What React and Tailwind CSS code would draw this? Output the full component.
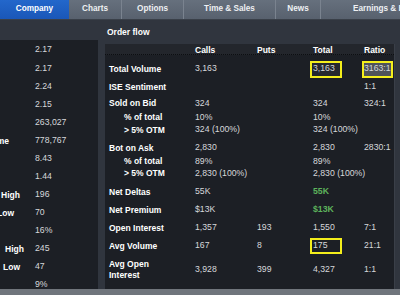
import React from "react";

const F = "font-['Liberation_Sans',Arial,Helvetica,sans-serif]";

function Tab({ w, active, children, border = true, extra = "" }) {
  return (
    <div
      className={`${w} shrink-0 h-full flex items-center justify-center whitespace-nowrap font-bold text-[8.2px] ${
        active
          ? "bg-gradient-to-b from-[#2367cb] to-[#1a57b8] text-white"
          : "text-[#eef0f3]"
      } ${border ? "border-r border-[#7a838f]" : ""} ${extra}`}
    >
      {children}
    </div>
  );
}

function LRow({ h = "h-[18px]", label, pr = "pr-[15px]", value }) {
  return (
    <div className={`${h} flex items-center`}>
      <div className={`w-[35px] shrink-0 overflow-hidden flex justify-end ${pr}`}>
        {label ? (
          <span className="whitespace-nowrap font-bold text-white text-[8.5px]">{label}</span>
        ) : null}
      </div>
      <span className="text-[#d6d8db] text-[8.7px] whitespace-nowrap">{value}</span>
    </div>
  );
}

function Box({ cls }) {
  return <div className={`absolute border-2 border-[#f4ee1c] ${cls}`} />;
}

function RRow({ h, label, sub, calls, puts, total, ratio, totalCls = "", totalBox, ratioBox, two }) {
  return (
    <div className={`grid grid-cols-[90px_62px_56px_51px_31px] ${h}`}>
      <div
        className={`flex items-center ${sub ? "pl-[19px]" : "pl-[4px]"} font-bold text-white text-[8.5px] whitespace-nowrap ${
          two ? "leading-[11px]" : ""
        }`}
      >
        <span>{label}</span>
      </div>
      <div className="flex items-center text-[#d6d8db] text-[8.7px] whitespace-nowrap">{calls}</div>
      <div className="flex items-center text-[#d6d8db] text-[8.7px] whitespace-nowrap">{puts}</div>
      <div className={`relative flex items-center text-[8.7px] whitespace-nowrap ${totalCls || "text-[#d6d8db]"}`}>
        {totalBox}
        <span className="relative">{total}</span>
      </div>
      <div className="relative flex items-center text-[#d6d8db] text-[8.7px] whitespace-nowrap">
        {ratioBox}
        <span className="relative">{ratio}</span>
      </div>
    </div>
  );
}

export default function App() {
  return (
    <div className={`${F} w-[400px] h-[295px] overflow-hidden bg-[#30353e] flex flex-col`}>
      {/* Tab bar */}
      <div className="h-[20px] shrink-0 flex overflow-hidden bg-gradient-to-b from-[#66707d] to-[#58616e] border-b border-[#3a4049]">
        <Tab w="w-[69px]" active border={false}>Company</Tab>
        <Tab w="w-[53px]">Charts</Tab>
        <Tab w="w-[62px]">Options</Tab>
        <Tab w="w-[92px]">Time &amp; Sales</Tab>
        <Tab w="w-[45px]">News</Tab>
        <Tab w="w-[150px]" border={false} extra="justify-start pl-[32px]">
          Earnings &amp; Estimates
        </Tab>
      </div>

      {/* Main */}
      <div className="flex h-[269px] shrink-0">
        {/* Left panel */}
        <div className="w-[98px] shrink-0 pt-[20px]">
          <div className="h-full bg-[#1c1f25] overflow-hidden">
            <LRow h="h-[20px]" value="2.17" />
            <LRow value="2.17" />
            <LRow value="2.24" />
            <LRow value="2.15" />
            <LRow value="263,027" />
            <LRow label="Volume" pr="pr-[26px]" value="778,767" />
            <LRow value="8.43" />
            <LRow value="1.44" />
            <LRow label="Day High" pr="pr-[15px]" value="196" />
            <LRow label="Day Low" pr="pr-[21px]" value="70" />
            <LRow value="16%" />
            <LRow label="High" pr="pr-[11px]" value="245" />
            <LRow label="Low" pr="pr-[15px]" value="47" />
            <LRow value="9%" />
          </div>
        </div>

        {/* Right column */}
        <div className="ml-[7px] w-[290px] shrink-0 flex flex-col">
          <div className="h-[24px] shrink-0 flex items-center pl-[2px] pt-[1px] font-bold text-white text-[8.5px]">
            Order flow
          </div>
          <div className="flex-1 bg-[#1c1f25] border-r border-[#3a3f48]">
            {/* Header row */}
            <div className="grid grid-cols-[90px_62px_56px_51px_31px] h-[11px] items-center bg-[#23262c] border-b border-dotted border-[#0c0e11] font-bold text-white text-[8.5px]">
              <div />
              <div>Calls</div>
              <div>Puts</div>
              <div>Total</div>
              <div>Ratio</div>
            </div>
            <div className="pt-[5px]">
              <RRow
                h="h-[18px]"
                label="Total Volume"
                calls="3,163"
                total="3,163"
                ratio="3163:1"
                totalBox={<Box cls="left-[-3px] top-[1px] w-[32px] h-[17px] bg-[#25282e]" />}
                ratioBox={<Box cls="left-[-2px] top-[1px] w-[31px] h-[17px] bg-[#4f535a]" />}
              />
              <RRow h="h-[18px]" label="ISE Sentiment" ratio="1:1" />
              <RRow h="h-[15px]" label="Sold on Bid" calls="324" total="324" ratio="324:1" />
              <RRow h="h-[12px]" sub label="% of total" calls="10%" total="10%" />
              <RRow h="h-[14px]" sub label="> 5% OTM" calls="324 (100%)" total="324 (100%)" />
              <div className="pt-[4px]">
                <RRow h="h-[14px]" label="Bot on Ask" calls="2,830" total="2,830" ratio="2830:1" />
              </div>
              <RRow h="h-[12px]" sub label="% of total" calls="89%" total="89%" />
              <RRow h="h-[13px]" sub label="> 5% OTM" calls="2,830 (100%)" total="2,830 (100%)" />
              <div className="pt-[3px]">
                <RRow h="h-[18px]" label="Net Deltas" calls="55K" total="55K" totalCls="text-[#5cb35c] font-bold" />
              </div>
              <RRow h="h-[18px]" label="Net Premium" calls="$13K" total="$13K" totalCls="text-[#5cb35c] font-bold" />
              <RRow h="h-[18px]" label="Open Interest" calls="1,357" puts="193" total="1,550" ratio="7:1" />
              <RRow
                h="h-[18px]"
                label="Avg Volume"
                calls="167"
                puts="8"
                total="175"
                ratio="21:1"
                totalBox={<Box cls="left-[-3px] top-[1px] w-[32px] h-[16px]" />}
              />
              <RRow
                h="h-[30px]"
                two
                label={
                  <>
                    Avg Open
                    <br />
                    Interest
                  </>
                }
                calls="3,928"
                puts="399"
                total="4,327"
                ratio="1:1"
              />
            </div>
          </div>
        </div>
      </div>
      <div className="flex-1 bg-[#70757c]" />
    </div>
  );
}
